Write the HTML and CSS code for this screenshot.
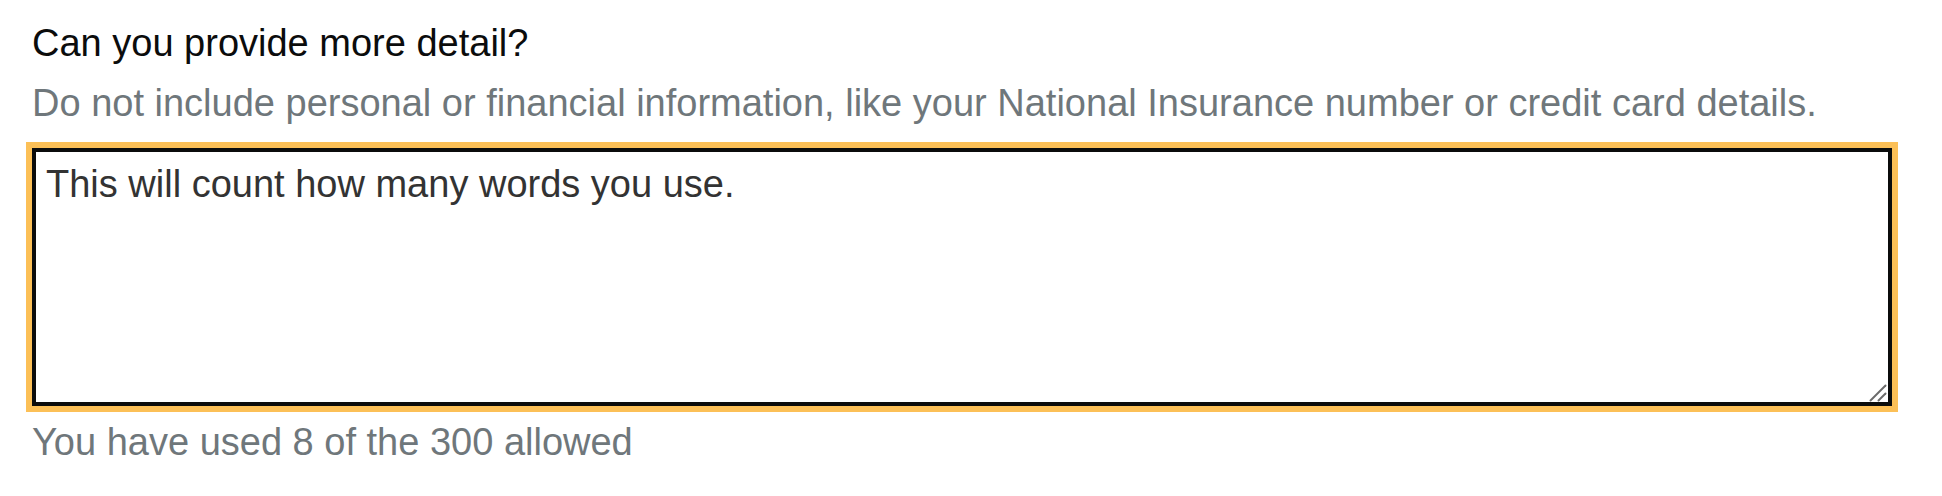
FILE: index.html
```html
<!DOCTYPE html>
<html lang="en">
<head>
<meta charset="utf-8">
<title>Character count</title>
<link rel="stylesheet" href="styles.css">
</head>
<body>
<div class="form-group">
  <label class="label" for="more-detail">Can you provide more detail?</label>
  <div class="hint">Do not include personal or financial information, like your National Insurance number or credit card details.</div>
  <div class="textarea-wrap">
    <textarea class="textarea" id="more-detail" rows="5">This will count how many words you use.</textarea>
    <svg class="resize-handle" width="18" height="18" viewBox="0 0 18 18" aria-hidden="true">
      <line x1="1.5" y1="16.5" x2="16.5" y2="1.5" />
      <line x1="9.5" y1="16.5" x2="16.5" y2="9.5" />
    </svg>
  </div>
  <div class="count-message">You have used 8 of the 300 allowed</div>
</div>
</body>
</html>
```
FILE: styles.css
```css
html, body {
  margin: 0;
  padding: 0;
  background: #ffffff;
}
body {
  font-family: "Liberation Sans", Arial, sans-serif;
}
.form-group {
  padding: 19px 32px 0 32px;
  display: flex;
  flex-direction: column;
  align-items: flex-start;
}
.label {
  display: block;
  font-size: 38px;
  line-height: 49px;
  color: #0b0c0c;
}
.hint {
  margin-top: 11px;
  font-size: 38px;
  line-height: 49px;
  color: #6f777b;
}
.textarea-wrap {
  position: relative;
  margin-top: 20px;
  width: 1860px;
  height: 258px;
  outline: 6px solid #fcc057;
}
.textarea {
  display: block;
  box-sizing: border-box;
  margin: 0;
  width: 100%;
  height: 100%;
  border: 4px solid #0b0c0c;
  outline: none;
  padding: 8px 10px 4px 10px;
  font-family: "Liberation Sans", Arial, sans-serif;
  font-size: 38px;
  line-height: 49px;
  color: #333333;
  background: #ffffff;
  resize: none;
  border-radius: 0;
}
.resize-handle {
  position: absolute;
  right: 5px;
  bottom: 4px;
  stroke: #6b6b6b;
  stroke-width: 2;
  stroke-linecap: round;
}
.count-message {
  margin-top: 12px;
  font-size: 38px;
  line-height: 49px;
  color: #6f777b;
}
```
